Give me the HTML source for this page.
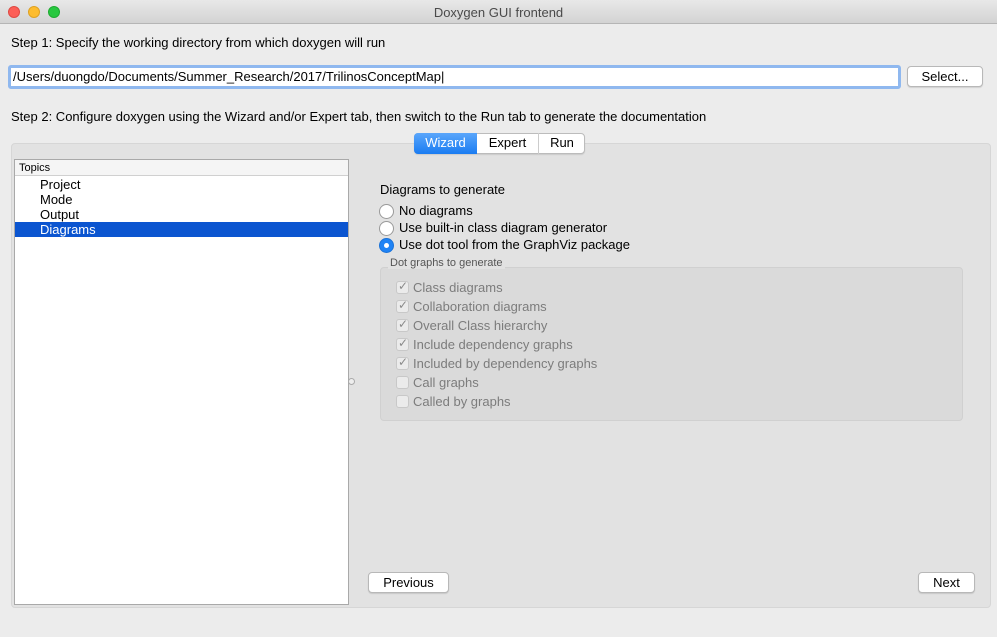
<!DOCTYPE html>
<html><head><style>
*{margin:0;padding:0;box-sizing:border-box}
body{width:997px;height:637px;background:#ececec;font-family:"Liberation Sans",sans-serif;font-size:13px;color:#000;position:relative;overflow:hidden}
.a{position:absolute;white-space:nowrap}
.title{left:0;top:0;width:997px;height:24px;background:linear-gradient(#e8e8e8,#d3d3d3);border-bottom:1px solid #b5b5b5;text-align:center;line-height:26px;font-size:13px;color:#4a4a4a}
.dot{position:absolute;top:6px;width:12px;height:12px;border-radius:50%}
.btn{background:#fff;border:1px solid #b8b8b8;border-radius:4px;text-align:center;box-shadow:0 1px 1px rgba(0,0,0,.12)}
.cb{position:absolute;width:13px;height:13px;border:1px solid #c8c8c8;border-radius:3px;background:#ebebeb}
.gl{color:#7c7c7c}
.ck{position:absolute;color:#8a8a8a;font-size:12px}
.rad{position:absolute;width:15px;height:15px;border-radius:50%;border:1px solid #9a9a9a;background:#fff}
</style></head><body>
<div class="a title">Doxygen GUI frontend
<div class="dot" style="left:8px;background:#fc5f57;border:1px solid #de4a43"></div>
<div class="dot" style="left:28px;background:#fdbc2e;border:1px solid #dea123"></div>
<div class="dot" style="left:48px;background:#28c840;border:1px solid #1eaa31"></div>
</div>
<div class="a" style="left:11px;top:35px">Step 1: Specify the working directory from which doxygen will run</div>
<div class="a" style="left:8px;top:65px;width:893px;height:24px;border:3px solid #8fb8ef;border-radius:3px;background:#fff"></div>
<div class="a" style="left:13px;top:69px">/Users/duongdo/Documents/Summer_Research/2017/TrilinosConceptMap|</div>
<div class="a btn" style="left:907px;top:66px;width:76px;height:21px;line-height:19px">Select...</div>
<div class="a" style="left:11px;top:109px">Step 2: Configure doxygen using the Wizard and/or Expert tab, then switch to the Run tab to generate the documentation</div>
<div class="a" style="left:11px;top:143px;width:980px;height:465px;background:#e2e2e2;border:1px solid #d6d6d6;border-radius:4px"></div>
<div class="a" style="left:414px;top:133px;width:171px;height:21px;background:#fff;border:1px solid #bcbcbc;border-radius:4px;box-shadow:0 1px 1px rgba(0,0,0,.1)"></div>
<div class="a" style="left:414px;top:133px;width:63px;height:21px;background:linear-gradient(#5aa6fb,#1a7cf2);border-radius:4px 0 0 4px;color:#fff;text-align:center;line-height:20px;font-size:13px">Wizard</div>
<div class="a" style="left:477px;top:133px;width:62px;height:21px;border-right:1px solid #ccc;text-align:center;line-height:20px;font-size:13px">Expert</div>
<div class="a" style="left:539px;top:133px;width:46px;height:21px;text-align:center;line-height:20px;font-size:13px">Run</div>
<div class="a" style="left:14px;top:159px;width:335px;height:446px;background:#fff;border:1px solid #a9a9a9"></div>
<div class="a" style="left:15px;top:160px;width:333px;height:16px;background:#f5f5f5;border-bottom:1px solid #d0d0d0;font-size:11px;line-height:16px;padding-left:4px">Topics</div>
<div class="a" style="left:40px;top:177px">Project</div>
<div class="a" style="left:40px;top:192px">Mode</div>
<div class="a" style="left:40px;top:207px">Output</div>
<div class="a" style="left:15px;top:222px;width:333px;height:15px;background:#0b55d0"></div>
<div class="a" style="left:40px;top:222px;color:#fff">Diagrams</div>
<div class="a" style="left:380px;top:182px">Diagrams to generate</div>
<div class="rad" style="left:379px;top:204px"></div><div class="a" style="left:399px;top:203px">No diagrams</div>
<div class="rad" style="left:379px;top:221px"></div><div class="a" style="left:399px;top:220px">Use built-in class diagram generator</div>
<div class="rad" style="left:379px;top:238px;background:#1f83f5;border-color:#1a72d8"><div style="position:absolute;left:4px;top:4px;width:5px;height:5px;border-radius:50%;background:#fff"></div></div>
<div class="a" style="left:399px;top:237px">Use dot tool from the GraphViz package</div>
<div class="a" style="left:380px;top:267px;width:583px;height:154px;background:#dadada;border:1px solid #d0d0d0;border-radius:4px"></div>
<div class="a" style="left:388px;top:257px;font-size:11px;color:#555;background:#e2e2e2;padding:0 2px">Dot graphs to generate</div>
<div class="cb" style="left:396px;top:281px"></div><div class="ck" style="left:398px;top:279px">✓</div><div class="a gl" style="left:413px;top:280px">Class diagrams</div>
<div class="cb" style="left:396px;top:300px"></div><div class="ck" style="left:398px;top:298px">✓</div><div class="a gl" style="left:413px;top:299px">Collaboration diagrams</div>
<div class="cb" style="left:396px;top:319px"></div><div class="ck" style="left:398px;top:317px">✓</div><div class="a gl" style="left:413px;top:318px">Overall Class hierarchy</div>
<div class="cb" style="left:396px;top:338px"></div><div class="ck" style="left:398px;top:336px">✓</div><div class="a gl" style="left:413px;top:337px">Include dependency graphs</div>
<div class="cb" style="left:396px;top:357px"></div><div class="ck" style="left:398px;top:355px">✓</div><div class="a gl" style="left:413px;top:356px">Included by dependency graphs</div>
<div class="cb" style="left:396px;top:376px"></div><div class="a gl" style="left:413px;top:375px">Call graphs</div>
<div class="cb" style="left:396px;top:395px"></div><div class="a gl" style="left:413px;top:394px">Called by graphs</div>
<div class="a" style="left:348px;top:378px;width:7px;height:7px;border:1px solid #aaa;border-radius:50%;background:#eee"></div>
<div class="a btn" style="left:368px;top:572px;width:81px;height:21px;line-height:19px">Previous</div>
<div class="a btn" style="left:918px;top:572px;width:57px;height:21px;line-height:19px">Next</div>
</body></html>
